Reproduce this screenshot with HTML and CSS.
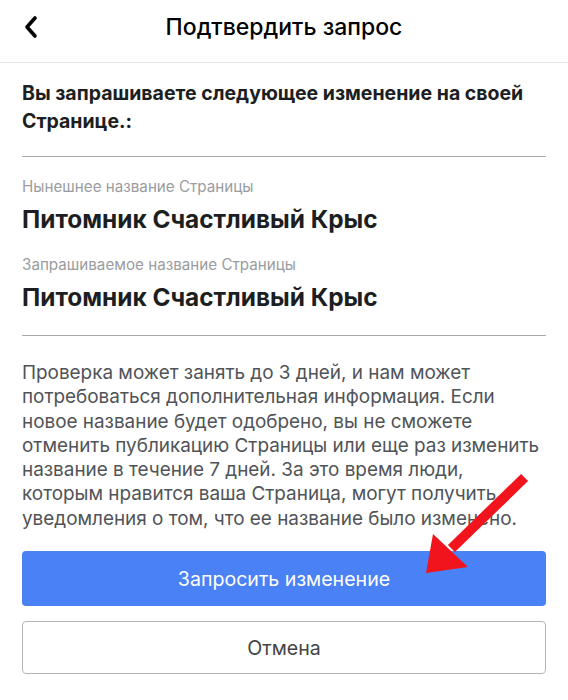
FILE: index.html
```html
<!DOCTYPE html>
<html lang="ru">
<head>
<meta charset="utf-8">
<link rel="stylesheet" href="styles.css">
</head>
<body>
<div class="screen">
  <header class="topbar">
    <span class="back">
      <svg width="16" height="24" viewBox="0 0 16 24"><path d="M12 3 L4 12 L12 21" fill="none" stroke="#000" stroke-width="3.6" stroke-linecap="round" stroke-linejoin="round"/></svg>
    </span>
    <h1 class="title">Подтвердить запрос</h1>
  </header>
  <main class="content">
    <p class="intro">Вы запрашиваете следующее изменение на своей Странице.:</p>
    <section class="names">
      <div class="label">Нынешнее название Страницы</div>
      <div class="name">Питомник Счастливый Крыс</div>
      <div class="label second">Запрашиваемое название Страницы</div>
      <div class="name">Питомник Счастливый Крыс</div>
    </section>
    <p class="note"><span class="ln">Проверка может занять до 3 дней, и нам может</span> <span class="ln">потребоваться дополнительная информация. Если</span> <span class="ln">новое название будет одобрено, вы не сможете</span> <span class="ln">отменить публикацию Страницы или еще раз изменить</span> <span class="ln">название в течение 7 дней. За это время люди,</span> <span class="ln">которым нравится ваша Страница, могут получить</span> <span class="ln">уведомления о том, что ее название было изменено.</span></p>
    <div class="actions">
      <button class="btn primary">Запросить изменение</button>
      <button class="btn secondary">Отмена</button>
    </div>
  </main>
  <svg class="arrow" width="568" height="700" viewBox="0 0 568 700">
    <line x1="521" y1="481" x2="455" y2="545" stroke="#f2141c" stroke-width="10" stroke-linecap="square"/>
    <polygon points="426,573 433,534 468,567" fill="#f2141c"/>
  </svg>
</div>
</body>
</html>
```
FILE: styles.css
```css
* { box-sizing: border-box; }
html, body { margin: 0; padding: 0; background: #fff; }
body { font-family: Inter, "Noto Sans", sans-serif; color: #1c1e21; }
.screen { position: relative; width: 568px; height: 700px; overflow: hidden; }
.topbar {
  position: relative;
  height: 63px;
  display: flex;
  align-items: center;
  justify-content: center;
  padding-bottom: 9px;
  border-bottom: 1px solid #e8e8ea;
}
.back { position: absolute; left: 23px; top: 15px; display: flex; }
.title { margin: 0; font-size: 23px; font-weight: 500; color: #000; line-height: 28px; }
.content { padding: 0 22px; }
.intro {
  margin: 0;
  padding: 16px 0 21px;
  font-size: 19.5px;
  line-height: 28px;
  font-weight: 700;
  color: #1c1e21;
  border-bottom: 1.5px solid #a8a8aa;
}
.names { padding: 20px 0 23px; border-bottom: 1.5px solid #a8a8aa; }
.label { font-size: 15.2px; color: #9a9ca0; line-height: 20px; }
.label.second { margin-top: 21px; }
.name { font-size: 24.4px; font-weight: 700; color: #1c1e21; line-height: 30px; margin-top: 7px; }
.note {
  margin: 0;
  padding: 25px 0 0;
  font-size: 18.9px;
  line-height: 24.3px;
  color: #505357;
}
.ln { display: block; white-space: nowrap; }
.actions { display: flex; flex-direction: column; gap: 15px; margin-top: 20px; }
.btn {
  font-family: inherit;
  width: 100%;
  height: 55px;
  border-radius: 4px;
  font-size: 19.6px;
  cursor: pointer;
}
.primary { background: #4a82f5; color: #fff; border: none; font-size: 19.6px; }
.secondary { background: #fff; color: #444; border: 1.5px solid #b5b5b8; height: 53px; }
.arrow { position: absolute; left: 0; top: 0; pointer-events: none; }
```
